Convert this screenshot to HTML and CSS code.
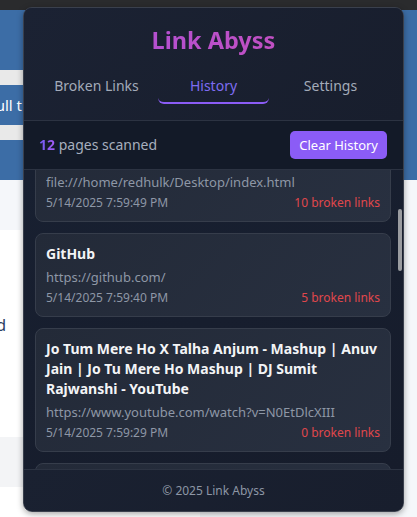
FILE: index.html
```html
<!DOCTYPE html>
<html lang="en">
<head>
<meta charset="utf-8">
<title>Link Abyss</title>
<link rel="stylesheet" href="styles.css">
</head>
<body>
<div class="page">
  <div class="row chrome-bar"></div>
  <div class="row hero">
    <div class="side">
      <div class="band blue band-tall"></div>
      <div class="band gray"></div>
      <div class="band blue band-mid text-band"><span class="clip-text">Full t</span></div>
      <div class="band gray"></div>
      <div class="band blue band-mid"></div>
    </div>
    <div class="fill blue"></div>
  </div>
  <div class="row strip">
    <div class="side soft"></div>
    <div class="fill soft"></div>
  </div>
  <div class="row body-row">
    <div class="side white body-text"><span class="clip-text dark">and</span></div>
    <div class="fill soft"></div>
  </div>
  <div class="row foot-row">
    <div class="side light"></div>
    <div class="fill soft"></div>
  </div>
  <div class="row last-row">
    <div class="side white"></div>
    <div class="fill soft"></div>
  </div>
</div>

<div class="popup">
  <header class="header">
    <h1 class="title">Link Abyss</h1>
    <nav class="tabs">
      <div class="tab">Broken Links</div>
      <div class="tab active">History</div>
      <div class="tab">Settings</div>
    </nav>
  </header>
  <div class="stats">
    <div class="count"><span class="num">12</span> pages scanned</div>
    <button class="clear-btn">Clear History</button>
  </div>
  <div class="list" id="list">
    <div class="card">
      <div class="card-title">Link Abyss Test Page – Broken Link Checker Sample With Multiple Sections and Navigation</div>
      <div class="card-url">file:///home/redhulk/Desktop/test.html</div>
      <div class="card-meta"><span>5/14/2025 8:01:12 PM</span><span class="broken">7 broken links</span></div>
    </div>
    <div class="card">
      <div class="card-title">Index</div>
      <div class="card-url">file:///home/redhulk/Desktop/index.html</div>
      <div class="card-meta"><span>5/14/2025 7:59:49 PM</span><span class="broken">10 broken links</span></div>
    </div>
    <div class="card" id="github">
      <div class="card-title">GitHub</div>
      <div class="card-url">https://github.com/</div>
      <div class="card-meta"><span>5/14/2025 7:59:40 PM</span><span class="broken">5 broken links</span></div>
    </div>
    <div class="card">
      <div class="card-title">Jo Tum Mere Ho X Talha Anjum - Mashup | Anuv Jain | Jo Tu Mere Ho Mashup | DJ Sumit Rajwanshi - YouTube</div>
      <div class="card-url">https://www.youtube.com/watch?v=N0EtDlcXIII</div>
      <div class="card-meta"><span>5/14/2025 7:59:29 PM</span><span class="broken">0 broken links</span></div>
    </div>
    <div class="card">
      <div class="card-title">YouTube</div>
      <div class="card-url">https://www.youtube.com/</div>
      <div class="card-meta"><span>5/14/2025 7:59:12 PM</span><span class="broken">2 broken links</span></div>
    </div>
    <div class="card">
      <div class="card-title">MDN Web Docs – Resources for Developers, by Developers</div>
      <div class="card-url">https://developer.mozilla.org/en-US/</div>
      <div class="card-meta"><span>5/14/2025 7:58:51 PM</span><span class="broken">1 broken links</span></div>
    </div>
    <div class="card">
      <div class="card-title">Stack Overflow - Where Developers Learn, Share, &amp; Build Careers | Questions and Answers for Programmers</div>
      <div class="card-url">https://stackoverflow.com/</div>
      <div class="card-meta"><span>5/14/2025 7:58:30 PM</span><span class="broken">3 broken links</span></div>
    </div>
    <div class="card">
      <div class="card-title">Google</div>
      <div class="card-url">https://www.google.com/</div>
      <div class="card-meta"><span>5/14/2025 7:58:02 PM</span><span class="broken">0 broken links</span></div>
    </div>
    <div class="card">
      <div class="card-title">Wikipedia, the free encyclopedia – Main Page and Featured Articles of the Day</div>
      <div class="card-url">https://en.wikipedia.org/wiki/Main_Page</div>
      <div class="card-meta"><span>5/14/2025 7:57:44 PM</span><span class="broken">4 broken links</span></div>
    </div>
    <div class="card">
      <div class="card-title">Chrome Web Store - Extensions, Themes and Apps for Your Browser</div>
      <div class="card-url">https://chromewebstore.google.com/</div>
      <div class="card-meta"><span>5/14/2025 7:57:20 PM</span><span class="broken">6 broken links</span></div>
    </div>
    <div class="card">
      <div class="card-title">Hacker News – Top Stories From the Technology Community Today</div>
      <div class="card-url">https://news.ycombinator.com/</div>
      <div class="card-meta"><span>5/14/2025 7:56:58 PM</span><span class="broken">8 broken links</span></div>
    </div>
    <div class="card">
      <div class="card-title">Reddit - Dive into anything, Front Page of the Internet</div>
      <div class="card-url">https://www.reddit.com/</div>
      <div class="card-meta"><span>5/14/2025 7:56:31 PM</span><span class="broken">9 broken links</span></div>
    </div>
  </div>
  <div class="scroll-thumb"></div>
  <footer class="footer">© 2025 Link Abyss</footer>
</div>
<script src="script.js"></script>
</body>
</html>
```

FILE: styles.css
```css
* { box-sizing: border-box; }
html, body { margin: 0; padding: 0; }
body {
  width: 417px;
  height: 517px;
  overflow: hidden;
  font-family: "Noto Sans", "Open Sans", sans-serif;
  background: #ffffff;
}

/* background page */
.page { display: flex; flex-direction: column; width: 417px; }
.row { display: flex; width: 100%; flex: none; }
.side { width: 200px; flex: none; }
.fill { flex: 1; }
.chrome-bar { height: 10px; background: #2a2b2d; }
.hero { height: 170px; }
.hero .side { display: flex; flex-direction: column; }
.band { flex: none; }
.band-tall { height: 60px; }
.band-mid { height: 40px; }
.band.gray { height: 15px; background: #e9e9e9; }
.blue { background: #3c6da6; }
.text-band { display: flex; align-items: center; }
.clip-text {
  display: flex;
  justify-content: flex-end;
  width: 22px;
  white-space: nowrap;
  color: #ffffff;
  font-size: 15px;
}
.clip-text.dark { color: #2c3f63; width: 6px; font-size: 16px; }
.strip { height: 50px; }
.soft { background: #f5f7fa; }
.white { background: #ffffff; }
.light { background: #f3f4f6; }
.body-row { height: 207px; }
.body-text { display: flex; align-items: flex-start; padding-top: 84px; }
.foot-row { height: 50px; }
.last-row { height: 30px; }

/* popup */
.popup {
  position: absolute;
  left: 23px;
  top: 7px;
  width: 381px;
  height: 505px;
  border: 1px solid #3a404d;
  border-radius: 9px;
  overflow: hidden;
  display: flex;
  flex-direction: column;
  background: linear-gradient(160deg, #1b2233 0%, #171d2c 100%);
  box-shadow: 0 2px 6px rgba(0,0,0,0.35);
}
.header {
  padding: 17px 14px 16px;
  border-bottom: 1px solid #2c3342;
  background: linear-gradient(135deg, #1b2233, #181e2d);
}
.title {
  margin: 0;
  text-align: center;
  font-size: 23.5px;
  line-height: 30px;
  font-weight: 700;
  background: linear-gradient(90deg, #a950dc, #cc50b6);
  -webkit-background-clip: text;
  background-clip: text;
  color: transparent;
}
.tabs { display: flex; margin-top: 13px; }
.tab {
  flex: 1;
  margin: 0 3px;
  text-align: center;
  font-size: 14px;
  line-height: 20px;
  padding: 8px 0 6px;
  color: #a3abb9;
  border-bottom: 2px solid transparent;
  border-radius: 0 0 6px 6px;
}
.tab.active { color: #7f6cf2; border-bottom-color: #8b5cf6; }

.stats {
  display: flex;
  align-items: center;
  justify-content: space-between;
  flex: none;
  height: 49px;
  padding: 0 16px 0 15px;
  background: #131a28;
  border-bottom: 1px solid #2c3342;
}
.count { font-size: 14px; color: #a7afbe; line-height: 20px; }
.num {
  font-weight: 700;
  background: linear-gradient(90deg, #6d5cf2, #a55cf5);
  -webkit-background-clip: text;
  background-clip: text;
  color: transparent;
}
.clear-btn {
  height: 28px;
  padding: 0 9px;
  border: none;
  border-radius: 5px;
  background: #8b5cf6;
  color: #ffffff;
  font-family: "Noto Sans", "Open Sans", sans-serif;
  font-size: 13px;
}

.list {
  flex: 1;
  overflow-y: auto;
  padding: 12px 12px 12px 11px;
  display: flex;
  flex-direction: column;
  gap: 11px;
  background: linear-gradient(160deg, #182031, #161c2b);
  scrollbar-width: none;
}
.list::-webkit-scrollbar { display: none; }
.scroll-thumb {
  position: absolute;
  left: 374px;
  top: 201px;
  width: 4px;
  height: 62px;
  border-radius: 2px;
  background: #9a9ca0;
}
.card {
  flex: none;
  padding: 10px;
  border: 1px solid #363d4b;
  border-radius: 8px;
  background: linear-gradient(135deg, #232a38, #283040);
}
.card-title {
  color: #f3f4f6;
  font-size: 14px;
  font-weight: 700;
  line-height: 20px;
  margin-bottom: 4px;
}
.card-url {
  color: #8e97a6;
  font-size: 13px;
  line-height: 18px;
  margin-bottom: 4px;
  white-space: nowrap;
  overflow: hidden;
  text-overflow: ellipsis;
}
.card-meta {
  display: flex;
  justify-content: space-between;
  font-size: 12px;
  line-height: 16px;
  color: #8e97a6;
}
.broken { color: #e0474c; }

.footer {
  flex: none;
  padding: 12px 0;
  line-height: 17px;
  text-align: center;
  font-size: 12px;
  color: #8d96a5;
  border-top: 1px solid #2c3342;
  background: linear-gradient(135deg, #1a2131, #181e2d);
}
```

FILE: script.js
```js
(function () {
  var list = document.getElementById('list');
  var gh = document.getElementById('github');
  var delta = gh.getBoundingClientRect().top - 233;
  list.scrollTop = list.scrollTop + delta;
})();
```
